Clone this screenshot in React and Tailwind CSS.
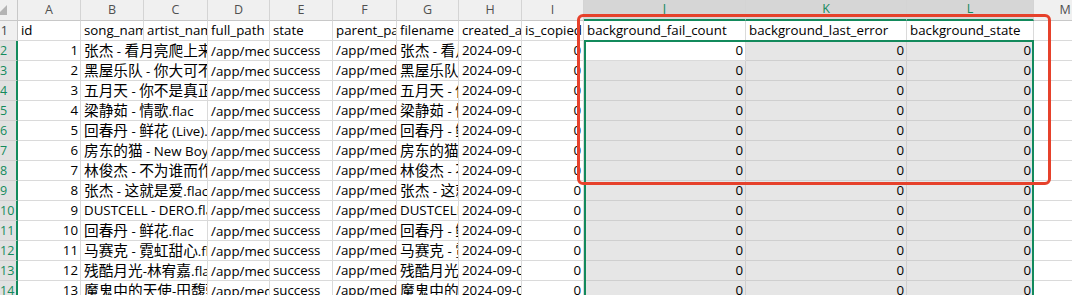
import React from 'react'

const songs = [
  '张杰 - 看月亮爬上来.flac',
  '黑屋乐队 - 你大可不必.flac',
  '五月天 - 你不是真正的快乐.flac',
  '梁静茹 - 情歌.flac',
  '回春丹 - 鲜花 (Live).flac',
  '房东的猫 - New Boy.flac',
  '林俊杰 - 不为谁而作的歌.flac',
  '张杰 - 这就是爱.flac',
  'DUSTCELL - DERO.flac',
  '回春丹 - 鲜花.flac',
  '马赛克 - 霓虹甜心.flac',
  '残酷月光-林宥嘉.flac',
  '魔鬼中的天使-田馥甄.flac',
]

const letters = ['A', 'B', 'C', 'D', 'E', 'F', 'G', 'H', 'I', 'J', 'K', 'L', 'M']
const selectedCols = ['J', 'K', 'L']

const base = 'h-[20px] overflow-hidden whitespace-nowrap leading-[19px] border-b border-r'
const plain = 'bg-white border-[#dadada]'
const shaded = 'bg-[#e6e6e6] border-[#cfcfcf]'

// chinese runs get the larger size, like the sheet's east-asian font
const Mixed = ({ text }) =>
  String(text)
    .split(/([\u3400-\u9fff]+)/)
    .map((part, i) =>
      /[\u3400-\u9fff]/.test(part) ? (
        <span key={i} className="text-[14.67px]">
          {part}
        </span>
      ) : (
        part
      )
    )

const Cell = ({ children, right, sel, span2 }) => (
  <div
    className={`${base} ${sel ? shaded : plain} ${right ? 'text-right pr-[2px]' : 'pl-[3px]'} ${
      span2 ? 'col-span-2' : ''
    }`}
  >
    {children != null && <Mixed text={children} />}
  </div>
)

const ColHeader = ({ letter }) => {
  const sel = selectedCols.includes(letter)
  return (
    <div
      className={`h-[21px] flex items-center justify-center border-r border-[#d4d4d4] text-[12.5px] ${
        sel
          ? 'bg-[#d6d6d6] text-[#138a5c] border-b-2 border-b-[#138a5c]'
          : 'bg-[#f0f0f0] text-[#505050] border-b border-b-[#c8c8c8]'
      }`}
    >
      {letter}
    </div>
  )
}

const RowHeader = ({ n, sel }) => (
  <div
    className={`h-[20px] overflow-hidden whitespace-nowrap leading-[19px] text-right pr-[9px] border-b text-[12.5px] ${
      sel
        ? 'bg-[#e1e1e1] text-[#138a5c] border-r-2 border-r-[#138a5c] border-b-[#d0d0d0]'
        : 'bg-[#f0f0f0] text-[#444444] border-r border-r-[#c8c8c8] border-b-[#d4d4d4]'
    }`}
  >
    {n}
  </div>
)

export default function App() {
  return (
    <div className="relative w-[1072px] h-[295px] overflow-hidden bg-white text-black text-[13.3px] font-['Open_Sans','Noto_Sans_CJK_SC',sans-serif]">
      <div className="grid w-[1097px] grid-cols-[18px_63px_63px_64px_62px_63px_64px_62px_63px_62px_162px_161px_127px_63px]">
        {/* corner */}
        <div className="h-[21px] bg-[#f0f0f0] border-r border-b border-[#c8c8c8]">
          <svg width="17" height="20" className="block">
            <polygon points="-3,15 7,5 7,15" fill="#b4b4b4" />
          </svg>
        </div>
        {letters.map((l) => (
          <ColHeader key={l} letter={l} />
        ))}

        {/* row 1 - field names */}
        <RowHeader n={1} />
        <Cell>id</Cell>
        <Cell>song_name</Cell>
        <Cell>artist_name</Cell>
        <Cell>full_path</Cell>
        <Cell>state</Cell>
        <Cell>parent_path</Cell>
        <Cell>filename</Cell>
        <Cell>created_at</Cell>
        <Cell>is_copied</Cell>
        <Cell>background_fail_count</Cell>
        <Cell>background_last_error</Cell>
        <Cell>background_state</Cell>
        <Cell />

        {songs.map((song, i) => (
          <React.Fragment key={i}>
            <RowHeader n={i + 2} sel />
            <Cell right>{i + 1}</Cell>
            <Cell span2>{song}</Cell>
            <Cell>{`/app/media/music/${song}`}</Cell>
            <Cell>success</Cell>
            <Cell>/app/media/music</Cell>
            <Cell>{song}</Cell>
            <Cell>{`2024-09-04 16:${String(10 + i).padStart(2, '0')}:21`}</Cell>
            <Cell right>0</Cell>
            <Cell right sel={i !== 0}>0</Cell>
            <Cell right sel>0</Cell>
            <Cell right sel>0</Cell>
            <Cell />
          </React.Fragment>
        ))}
      </div>

      {/* selection outline J2:L... */}
      <div className="absolute left-[584px] top-[40px] w-[450px] h-[300px] border-2 border-[#138a5c] pointer-events-none" />

      {/* red annotation box */}
      <div className="absolute left-[577px] top-[14px] w-[474px] h-[171px] border-[3px] border-[#e6412b] rounded-[6px] pointer-events-none" />
    </div>
  )
}
